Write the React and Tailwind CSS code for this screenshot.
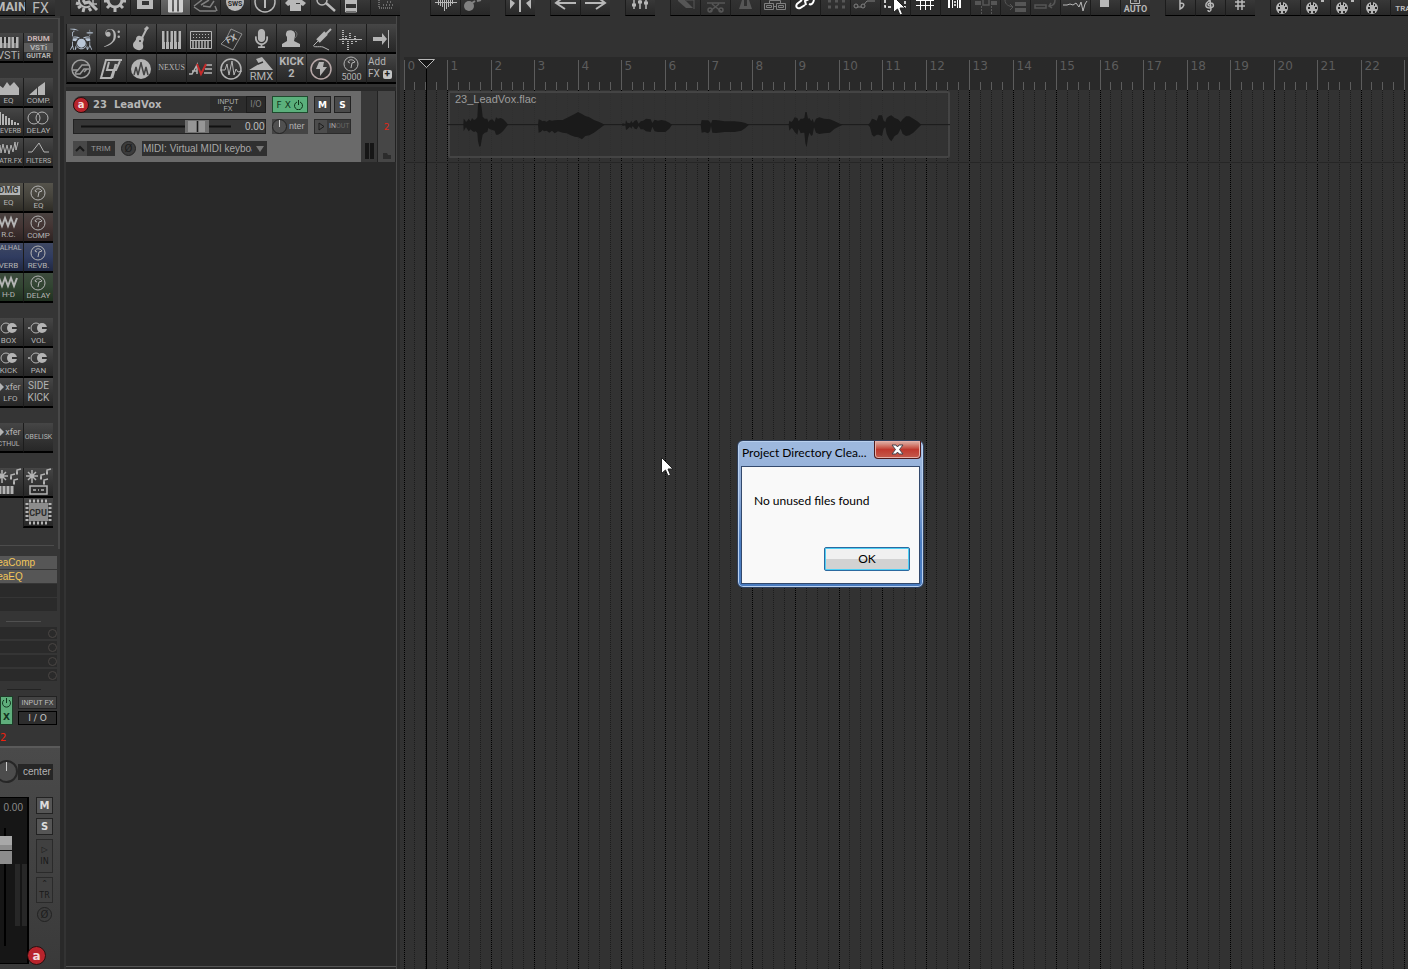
import React from "react";
import { GiDrumKit, GiFClef } from "react-icons/gi";
import { FaMicrophone } from "react-icons/fa";

const Art = ({ h = 28, children }) => (
  <svg
    width="29"
    height={h}
    viewBox={`0 0 29 ${h}`}
    fill="none"
    stroke="currentColor"
    strokeWidth="1.5"
    className="shrink-0"
    aria-hidden="true"
  >
    {children}
  </svg>
);

const tones = {
  grey: "from-[#464646] via-[#353535] to-[#272727]",
  olive: "from-[#55534b] via-[#45433c] to-[#2e2c26]",
  red: "from-[#4a4240] via-[#433433] to-[#2e2322]",
  blue: "from-[#3f4862] via-[#303c60] to-[#202842]",
  green: "from-[#3d4b3d] via-[#314431] to-[#203020]",
};

const Tool = ({ name, tone = "grey", children }) => (
  <button
    type="button"
    aria-label={name}
    className={`flex h-[30px] w-[30px] shrink-0 flex-col items-center justify-center overflow-hidden border-b-2 border-l border-b-black border-l-[#1c1c1c] bg-linear-to-b text-[#b4b4b4] ${tones[tone]}`}
  >
    {children}
  </button>
);

const Tag = ({ children }) => (
  <span className="whitespace-nowrap font-[Roboto,sans-serif] text-[8px] leading-[10px]">{children}</span>
);

const SmallTag = ({ children }) => (
  <span className="whitespace-nowrap font-[Roboto,sans-serif] text-[7px] leading-[10px]">{children}</span>
);

/* ---------- top toolbar ---------- */

const MidiPlug = ({ dot }) => (
  <Art h={15}>
    <circle cx="11" cy="8" r="6" fill="currentColor" stroke="none" />
    <path d="M7 7h2v2h-2zM10 2h2v3h-2zM14 7h2v2h-2zM8 11h2v2h-2zM12 11h2v2h-2zM8 4h1v2h-1zM13 4h1v2h-1z" fill="#2b2b2b" stroke="none" />
    {dot && <path d="M20 1h3" strokeWidth="2" />}
  </Art>
);

const topGroups = [
  [
    { name: "Main", art: <span className="text-[13px] leading-[14px] font-bold">MAIN</span> },
    { name: "FX", art: <span className="text-[14px] leading-[16px]">FX</span> },
  ],
  [
    {
      name: "Actions",
      art: (
        <Art h={15}>
          <path d="M5 3l3 1M7 8l3-2M12 12l1-4M20 11l-2-3" strokeWidth="3" />
          <path d="M8 0a7 7 0 0 0 11 6" strokeWidth="2" />
          <path d="M12 0l2 3 4-1 8 8" strokeWidth="3" />
          <path d="M22 0v4h4" strokeWidth="1.5" />
        </Art>
      ),
    },
    {
      name: "Settings",
      art: (
        <Art h={15}>
          <path d="M7 0a7 7 0 0 0 14 0" strokeWidth="3" />
          <path d="M14 7v5M9 5l-3 3M19 5l3 3M3 1h4M21 1h4" strokeWidth="3" />
        </Art>
      ),
    },
    { name: "Save", art: <Art h={15}><path d="M6 0h16v9H6zM11 1v4h7V1z" fill="currentColor" stroke="none" fillRule="evenodd" /></Art> },
    { name: "Mixer", on: true, art: <Art h={15}><path d="M8 0h3v12H8zM13 0h3v12h-3zM18 0h3v12h-3z" fill="currentColor" stroke="none" /><path d="M7.500 0v12h14V0" strokeWidth="1" /></Art> },
    { name: "Notes", dim: true, art: <Art h={15}><path d="M3 6l8-6M3 7l6 4 16 0M10 5l8-5M12 6l7 1 4-6M24 6l2 5" /></Art> },
    {
      name: "SWS",
      art: (
        <Art h={15}>
          <circle cx="14" cy="2" r="9" fill="currentColor" stroke="none" />
          <text x="14" y="6" textAnchor="middle" fontSize="7" fontWeight="bold" fill="#2b2b2b" stroke="none" fontFamily="Roboto">SWS</text>
        </Art>
      ),
    },
    { name: "Info", art: <Art h={15}><circle cx="14" cy="2" r="10" /><path d="M14 0v8" strokeWidth="2" /></Art> },
    { name: "Shirt", art: <Art h={15}><path d="M4 3l3-3h14l4 3-3 3-2-1v6H9V5L7 6zM15 3h4v1h-4z" fill="currentColor" stroke="none" fillRule="evenodd" /></Art> },
    { name: "Find", art: <Art h={15}><circle cx="11" cy="0" r="5" /><path d="M15 3l9 8" strokeWidth="2.5" /></Art> },
    { name: "Layers", art: <Art h={15}><path d="M4.500 0v12h11V0M4 3.500h11M4 8.500h11" strokeWidth="1" /><path d="M5 0h10v3H5zM5 9h10v2H5z" fill="currentColor" stroke="none" /></Art> },
    { name: "Spacing", dim: true, art: <Art h={15}><path d="M8 0v8h14" strokeDasharray="1 1" /><path d="M12 5h10M16 2h6" strokeDasharray="1 2" /></Art> },
  ],
  [
    { name: "Waveform", art: <Art h={15}><path d="M4 2.500h22M7.500 0v5M9.500 0v6M11.500 0v7M13.500 0v11M15.500 0v9M17.500 0v7M19.500 0v6M21.500 0v4" strokeWidth="1" /></Art> },
    { name: "Scrub", dim: true, art: <Art h={15}><circle cx="8" cy="6" r="5" fill="currentColor" stroke="none" /><path d="M11 3l3-2M16 1l4-1" strokeWidth="2" /></Art> },
  ],
  [{ name: "Split", art: <Art h={15}><path d="M14 0v12" strokeWidth="2" /><path d="M4 0v9l5-6-4-3zM25 0v9l-5-6 4-3z" fill="currentColor" stroke="none" /></Art> }],
  [
    { name: "Undo", art: <Art h={15}><path d="M25 3H6M14 9L5 3l5-4" strokeWidth="2" /></Art> },
    { name: "Redo", art: <Art h={15}><path d="M4 3h19M15 9l9-6-5-4" strokeWidth="2" /></Art> },
  ],
  [{ name: "Levels", art: <Art h={15}><path d="M8 0v9M14 0v9M20 0v9" strokeWidth="1.5" /><path d="M6 5h4M12 2h4M18 3h4" strokeWidth="3" /></Art> }],
  [
    { name: "Fade", off: true, art: <Art h={15}><path d="M7 0h7L22 8H15L7 1z" fill="currentColor" stroke="none" /><path d="M15 0h8v9" strokeWidth="1" /></Art> },
    { name: "Cut", off: true, art: <Art h={15}><path d="M6 3h18M8 12L18 4M21 12L11 4" /><circle cx="9" cy="10" r="2" /><circle cx="20" cy="10" r="2" /></Art> },
    { name: "Metronome", off: true, art: <Art h={15}><path d="M11 0L8 9h13L18 0zM13 0v6h3V0z" fill="currentColor" fillRule="evenodd" stroke="none" /></Art> },
    { name: "Group", dim: true, art: <Art h={15}><path d="M3.500 3.500h9v6h-9zM15.500 3.500h9v6h-9zM5.500 5.500h5v2h-5zM17.500 5.500h5v2h-5zM12 6.500h4M8.500 3V.500h11V3" strokeWidth="1" /></Art> },
    { name: "Link", bright: true, art: <Art h={15}><path d="M11 0L6 4c-2 3 1 5 3 4l5-3M15 5l-1-4 4-2M18 4c2 1 4 0 5-4" strokeWidth="2" /></Art> },
    { name: "Dots", off: true, art: <Art h={15}><path d="M7 1h3M14 1h3M21 1h3M7 7h3M14 7h3M21 7h3" strokeWidth="3" /></Art> },
    { name: "Envelope", dim: true, art: <Art h={15}><path d="M5 7h6l5-6h8" strokeWidth="1" /><circle cx="5" cy="6" r="2" fill="#333" strokeWidth="1" /><circle cx="12" cy="6" r="2" fill="#333" strokeWidth="1" /></Art> },
    { name: "Select", bright: true, art: <Art h={15}><path d="M4 0v7h20V0" strokeDasharray="3 2" /></Art> },
    { name: "Grid", bright: true, art: <Art h={15}><path d="M9.500 0v10M14.500 0v10M19.500 0v10M5 .500h18M5 5.500h18" strokeWidth="1" /></Art> },
    { name: "Bars", bright: true, art: <Art h={15}><path d="M8 0v8M19 0v8" strokeWidth="2" /><path d="M11.500 0v8M16.500 0v8" strokeWidth="1" /><path d="M13 2h2M13 5h2" /></Art> },
    { name: "Heal", off: true, art: <Art h={15}><path d="M4 3h6M20 3h6" strokeWidth="4" /><path d="M12 0v5h6V0" /><path d="M10.500 6v8M20.500 6v8" strokeWidth="1" strokeDasharray="2 1" /></Art> },
    { name: "Move rows", off: true, art: <Art h={15}><path d="M4 0c0 5 4 6 8 7M9 4l3 3-3 3" strokeWidth="1" /><path d="M14 2h11v4H14zM14 8h11v4H14z" fill="currentColor" stroke="none" /></Art> },
    { name: "Loop item", off: true, art: <Art h={15}><path d="M4 5h11v3H4zM18 6c4 0 6-2 6-6M20 3l-2 3 3 2" /></Art> },
    { name: "Automation", art: <Art h={15}><path d="M2 5h4l3-1 3 1 3-2 3 4 2-5 2 9 2-7 2-3" strokeWidth="1" /></Art> },
    { name: "Stop", art: <Art h={15}><path d="M9 0h9v7H9z" fill="currentColor" stroke="none" /></Art> },
    { name: "Auto", art: <><Art h={4}><path d="M9.500 0v3.500h9V0M13 1h3" strokeWidth="1" /></Art><span className="font-[Roboto,sans-serif] text-[9px] leading-[10px] font-bold">AUTO</span></> },
  ],
  [
    { name: "Flat", art: <Art h={15}><path d="M14 0v9c4-2 6-6 0-6" /></Art> },
    { name: "Clef", art: <Art h={15}><path d="M14 0c-6 4-5 8 0 8 5 0 4-6 0-5-3 1-2 3 0 3M14 0l1 9c0 3-3 3-3 1" strokeWidth="1.5" /></Art> },
    { name: "Sharp", art: <Art h={15}><path d="M12 0v10M16 0v10M9 2h10M9 6h10" /></Art> },
  ],
  [
    { name: "MIDI 1", art: <MidiPlug /> },
    { name: "MIDI 2", art: <MidiPlug dot /> },
    { name: "MIDI 3", art: <MidiPlug dot /> },
    { name: "MIDI 4", art: <MidiPlug /> },
    { name: "Track", art: <span className="pt-[3px] text-[8px] leading-[12px] font-bold">TRAK</span> },
  ],
];

const topColor = ({ on, off, dim, bright }) => {
  if (off) return "text-[#565656] from-[#323232] to-[#2b2b2b]";
  if (dim) return "text-[#808080] from-[#333] to-[#282828]";
  if (bright) return "text-white from-[#2c2c2c] to-[#2c2c2c]";
  if (on) return "text-[#cfcfcf] from-[#666] to-[#505050]";
  return "text-[#b8b8b8] from-[#383838] to-[#282828]";
};

const TopBar = () => (
  <header className="-ml-[5px] flex h-4 shrink-0 gap-[15px] overflow-hidden font-[Roboto,sans-serif]">
    {topGroups.map((group, i) => (
      <div key={i} className={`flex shrink-0 ${i === 2 ? "ml-[15px]" : ""}`}>
        {group.map((b) => (
          <button
            key={b.name}
            type="button"
            aria-label={b.name}
            className={`flex h-4 w-[30px] flex-col items-center overflow-hidden border-b border-l border-b-black border-l-[#1c1c1c] bg-linear-to-b ${topColor(b)}`}
          >
            {b.art}
          </button>
        ))}
      </div>
    ))}
  </header>
);

/* ---------- left dock ---------- */

const Dmg = () => (
  <Art h={18}>
    <circle cx="14" cy="10" r="7" strokeWidth="1" />
    <path d="M11 8c1-3 5-3 7 0l-3 1-1 5M11 8l2 1" strokeWidth="1" />
  </Art>
);

const Waves = () => (
  <Art h={15}>
    <path d="M5 3l3 8 3-8 3 8 3-8 3 8 3-8" strokeWidth="2" />
  </Art>
);

const Knobs = () => (
  <Art h={17}>
    <circle cx="12" cy="9" r="5" strokeWidth="1" />
    <circle cx="18" cy="9" r="5" fill="currentColor" stroke="none" />
    <path d="M18 9h6" stroke="#333" strokeWidth="2" />
    <path d="M4 9h2" />
  </Art>
);

const Keys = () => (
  <Art h={16}>
    <path d="M7 3v11M11 3v11M15 3v11M19 3v11M23 3v11" strokeWidth="3" />
    <path d="M9 3v6M13 3v6M21 3v6" stroke="#2b2b2b" strokeWidth="2" />
  </Art>
);

const Xfer = () => (
  <span className="flex items-center gap-px text-[9px] leading-[13px] font-[Roboto,sans-serif]">
    <svg width="8" height="12" viewBox="0 0 8 12" fill="none" stroke="currentColor" strokeWidth="3"><path d="M1 1l5 5-5 5" /></svg>
    xfer
  </span>
);

const Spark = ({ children }) => (
  <Art>
    <path d="M8 2v13M2 8h12M4 4l8 8M12 4l-8 8" strokeWidth="1.5" />
    <path d="M17 10v-3l4-1M23 5v-3l4-1M20 15v-3l4-1" strokeWidth="1.5" />
    <path d="M16 10h2M22 5h2M19 15h2" strokeWidth="3" />
    {children}
  </Art>
);

const dockGroups = [
  [
    { name: "VSTi", art: <><Keys /><span className="font-[Roboto,sans-serif] text-[11px] leading-[11px]">VSTi</span></> },
    {
      name: "Drum VSTi Guitar",
      art: (
        <span className="flex w-full flex-col text-center font-[Roboto,sans-serif] text-[8px] leading-[9px] font-bold">
          <span className="text-[#c9b5b5]">DRUM</span>
          <span className="bg-[#5b5b5b]">VSTi</span>
          <span className="text-[7px]">GUITAR</span>
        </span>
      ),
    },
  ],
  [
    { name: "EQ", art: <><Art h={17}><path d="M5 16V6l4 3 4-6 3 4 4-4 5 6v7z" fill="currentColor" stroke="none" /></Art><Tag>EQ</Tag></> },
    { name: "Comp", art: <><Art h={17}><path d="M5 16L13 9v7zM14 8l7-5v13h-7z" fill="currentColor" stroke="none" /></Art><Tag>COMP.</Tag></> },
    { name: "Reverb", art: <><Art h={17}><path d="M6 3v13M9 5v11M12 7v9M15 9v7M18 11v5M21 13v3M24 14v2" strokeWidth="2" /></Art><SmallTag>REVERB</SmallTag></> },
    { name: "Delay", art: <><Art h={17}><circle cx="10" cy="9" r="6" strokeWidth="1" /><circle cx="18" cy="9" r="6" strokeWidth="1" /></Art><Tag>DELAY</Tag></> },
    { name: "Saturation", art: <><Art h={17}><path d="M4 10l2-4 1 8 2-9 2 9 2-8 2 9 2-9 2 7 2-10 1 8 2-8" strokeWidth="1" /></Art><SmallTag>SATR.FX</SmallTag></> },
    { name: "Filters", art: <><Art h={17}><path d="M4 13h4l7-9 5 9h5" strokeWidth="1" /></Art><SmallTag>FILTERS</SmallTag></> },
  ],
  [
    { name: "DMG EQ", tone: "olive", art: <><span className="mb-[3px] bg-[#b4b4b4] px-[2px] font-[Roboto,sans-serif] text-[9px] leading-[9px] font-bold text-[#3b3b36]">DMG</span><Tag>EQ</Tag></> },
    { name: "EQuality", tone: "olive", art: <><Dmg /><Tag>EQ</Tag></> },
    { name: "R.C.", tone: "red", art: <><Waves /><Tag>R.C.</Tag></> },
    { name: "Compassion", tone: "red", art: <><Dmg /><Tag>COMP</Tag></> },
    { name: "Valhalla verb", tone: "blue", art: <><SmallTag>VALHAL</SmallTag><span className="pt-1 leading-[10px]"><Tag>VERB</Tag></span></> },
    { name: "Revb", tone: "blue", art: <><Dmg /><Tag>REVB.</Tag></> },
    { name: "H-Delay", tone: "green", art: <><Waves /><Tag>H-D</Tag></> },
    { name: "DMG Delay", tone: "green", art: <><Dmg /><Tag>DELAY</Tag></> },
  ],
  [
    { name: "Box", art: <><Knobs /><Tag>BOX</Tag></> },
    { name: "Vol", art: <><Knobs /><Tag>VOL</Tag></> },
    { name: "Kick", art: <><Knobs /><Tag>KICK</Tag></> },
    { name: "Pan", art: <><Knobs /><Tag>PAN</Tag></> },
    { name: "LFO", art: <><Xfer /><Tag>&nbsp; LFO</Tag></> },
    { name: "Side kick", art: <span className="font-[Roboto,sans-serif] text-[10px] leading-[12px]">SIDE<br />KICK</span> },
  ],
  [
    { name: "Cthulhu", art: <><Xfer /><SmallTag>CTHUL</SmallTag></> },
    { name: "Obelisk", art: <span className="font-[Roboto,sans-serif] text-[7px] leading-[12px]">OBELISK</span> },
  ],
  [
    { name: "Spark keys", art: <Spark><path d="M6 18v8M10 18v8M14 18v8M18 18v8" strokeWidth="3" /></Spark> },
    { name: "Spark tape", art: <Spark><path d="M6 18h17v8H6zM9 22h3M14 22h1M17 22h3" /></Spark> },
    null,
    {
      name: "CPU",
      art: (
        <Art>
          <path d="M5 3h20M5 25h20M3 5v20M26 5v20" strokeWidth="3" strokeDasharray="2 2" />
          <path d="M5 5h19v18H5z" fill="#8c8c8c" stroke="none" />
          <text x="14" y="18" textAnchor="middle" fontSize="9" fontWeight="bold" fill="#2b2b2b" stroke="none" fontFamily="Roboto">CPU</text>
        </Art>
      ),
    },
  ],
];

const Dock = () => (
  <div className="mt-[2px] flex h-[531px] flex-col justify-between overflow-hidden border-t border-r-2 border-[#484848] pt-[14px]">
    <div className="-ml-[7px] flex flex-col gap-[15px]">
      {dockGroups.map((group, i) => (
        <div key={i} className="grid w-[60px] grid-cols-2">
          {group.map((b, j) => (b ? <Tool key={b.name} name={b.name} tone={b.tone}>{b.art}</Tool> : <span key={j} />))}
        </div>
      ))}
    </div>
    <div className="mr-1 mb-[3px] h-px bg-[#4c4c4c]" />
  </div>
);

/* ---------- mixer strip ---------- */

const Badge = ({ className }) => (
  <span
    className={`flex shrink-0 items-center justify-center rounded-full border border-[#2a1010] bg-[#b8242c] font-['DejaVu_Sans',sans-serif] font-bold text-[#f4dcdc] ${className}`}
  >
    a
  </span>
);

const Phase = () => (
  <button type="button" aria-label="Phase" className="flex size-[15px] items-center justify-center rounded-full border border-[#222] bg-[#3c3c3c] text-[10px] text-[#1c1c1c]">
    Ø
  </button>
);

const MixerStrip = () => (
  <section className="flex min-h-0 flex-1 flex-col font-['DejaVu_Sans',sans-serif]">
    <ul className="mt-[7px] mr-[3px] flex flex-col gap-px text-[10px] leading-[13px] text-[#f2c65a] font-['Liberation_Sans',sans-serif]">
      <li className="-ml-[10px] overflow-hidden bg-[#565656] text-[10px]">ReaComp</li>
      <li className="-ml-[10px] overflow-hidden bg-[#565656]">ReaEQ</li>
      <li className="h-[13px] bg-[#2a2a2a]" />
      <li className="h-[13px] bg-[#2a2a2a]" />
    </ul>
    <div className="mt-[10px] ml-[6px] h-px w-[35px] bg-[#505050]" />
    <ul className="mt-[5px] mr-[3px] flex flex-col gap-[2px]">
      {[0, 1, 2, 3].map((n) => (
        <li key={n} className="flex h-3 justify-end bg-[#2a2a2a]">
          <span className="mt-[2px] size-[9px] rounded-full border border-[#4a4644]" />
        </li>
      ))}
    </ul>
    <div className="mt-2 ml-[7px] h-px w-[34px] bg-[#222]" />
    <div className="mt-[6px] mr-[3px] flex justify-between">
      <div className="flex h-[29px] w-[13px] flex-col items-center justify-between border border-[#1d3d28] bg-[#5fae7c] text-[9px] leading-[13px] font-bold text-[#12351f]">
        <svg width="11" height="12" viewBox="0 0 11 12" fill="none" stroke="currentColor" strokeWidth="1"><path d="M3 3a4 4 0 1 0 5 0M5.500 1v5" /></svg>
        <span>X</span>
      </div>
      <div className="flex flex-col gap-[2px]">
        <button type="button" className="h-[13px] w-[39px] whitespace-nowrap border border-[#222] bg-[#444] text-center font-['Liberation_Sans',sans-serif] text-[7px] leading-[11px] text-[#c0c0c0]">INPUT FX</button>
        <button type="button" className="h-[14px] w-[39px] border border-black bg-[#2c2c2c] text-[9px] leading-[12px] text-[#c4c4c4]">I / O</button>
      </div>
    </div>
    <div className="mt-[6px] text-[10px] leading-[14px] text-[#f0200c]">2</div>
    <div className="mt-px flex flex-1 flex-col border-t-2 border-[#5a5a5a] bg-linear-to-b from-[#4a4a4a] to-[#3a3a3a] pt-3">
      <div className="-ml-[5px] flex items-center">
        <span className="flex size-[23px] justify-center rounded-full border-2 border-[#262626] bg-[#4c4c4c]"><span className="h-[9px] w-px bg-[#ccc]" /></span>
        <span className="w-[35px] bg-[#262626] pl-[5px] font-['Liberation_Sans',sans-serif] text-[10px] leading-4 text-[#b4b4b4]">center</span>
      </div>
      <div className="mt-[14px] flex flex-1 gap-[7px]">
        <div className="flex h-[167px] w-[29px] flex-col border-y border-r-2 border-black bg-[#161616]">
          <span className="pt-1 text-right pr-1 font-['Liberation_Sans',sans-serif] text-[10px] leading-[12px] text-[#8a8a8a]">0.00</span>
          <svg width="27" height="146" viewBox="0 0 27 146" aria-label="Volume fader">
            <path d="M5 14v118" stroke="#000" strokeWidth="2" />
            <path d="M15 50h5v62h-5zM22 50h5v62h-5z" fill="#272727" />
            <path d="M0 22h12v28H0z" fill="#8c8c8c" />
            <path d="M0 22h12v9H0z" fill="#a8a8a8" />
            <path d="M0 36.500h12" stroke="#111" />
          </svg>
        </div>
        <div className="flex w-[17px] flex-col items-center gap-1">
          <button type="button" className="h-[17px] w-[17px] border border-[#222] bg-[#555] text-[10px] leading-[15px] font-bold text-[#ddd]">M</button>
          <button type="button" className="h-[17px] w-[17px] border border-[#222] bg-[#555] text-[10px] leading-[15px] font-bold text-[#ddd]">S</button>
          <button type="button" className="h-[34px] w-[17px] border border-[#2a2a2a] bg-[#404040] text-[8px] leading-[12px] text-[#191919]">▷<br />IN</button>
          <button type="button" className="h-[26px] w-[17px] border border-[#2a2a2a] bg-[#404040] text-[8px] leading-[12px] text-[#191919]">⌃<br />TR</button>
          <Phase />
          <Badge className="mt-5 -ml-4 size-[19px] text-[12px]" />
        </div>
      </div>
    </div>
  </section>
);

/* ---------- fx toolbar + track panel ---------- */

const fxTools = [
  { name: "Drums", art: <GiDrumKit size={25} color="#b9c6d6" /> },
  { name: "Bass", art: <GiFClef size={20} /> },
  {
    name: "Guitar",
    art: (
      <Art>
        <path d="M20 4l-6 12" strokeWidth="2" />
        <path d="M18 6l3-3" strokeWidth="3" />
        <path d="M13 12c-2-1-4 1-4 3s-3 3-3 6c0 5 8 7 10 3 1-3-1-4 0-6s2-5-3-6z" fill="currentColor" stroke="none" />
        <circle cx="13" cy="17" r="1" fill="#333" stroke="none" />
      </Art>
    ),
  },
  { name: "Piano", art: <Art><path d="M5 7h3v18H5zM9 7h3v18H9zM13 7h3v18h-3zM17 7h3v18h-3zM21 7h3v18h-3z" fill="currentColor" stroke="none" /><path d="M8.500 7v11M12.500 7v11M20.500 7v11" stroke="#2b2b2b" strokeWidth="2" /></Art> },
  { name: "Synth", art: <Art><path d="M3.500 7.500h21v17h-21zM3 16.500h21" strokeWidth="1" /><path d="M6 10.500h16M6 13.500h16" strokeWidth="1" strokeDasharray="1 2" /><path d="M6 17v7M9 17v7M12 17v7M15 17v7M18 17v7M21 17v7" strokeWidth="1.5" /></Art> },
  { name: "FX pedal", art: <Art><g stroke="#8f8f8f" strokeWidth="1"><path d="M9 15L14 5l11 5-9 16-12-6zM9 15l-5 5" /></g><text x="9" y="18" transform="rotate(-25 14 15)" fontSize="9" fill="currentColor" stroke="none" fontWeight="bold" fontFamily="Roboto">FX</text></Art> },
  { name: "Microphone", art: <FaMicrophone size={19} /> },
  { name: "Group", art: <Art><path d="M10 7c4-2 9 0 8 5l-1 5 6 3v3H5v-3l5-3v-4c-2-2-1-4 0-6z" fill="currentColor" stroke="none" /><path d="M18 7c3 2 2 5 0 7" stroke="#777" strokeWidth="1" /></Art> },
  { name: "Jack", art: <Art><path d="M24 5l-5 5" strokeWidth="2" /><path d="M19 9l-8 8" strokeWidth="5" /><path d="M11 17l-4 4c-2 3 5 1 9 2l6 3" strokeWidth="1" /></Art> },
  { name: "Peaks", art: <Art><path d="M2 15.500h23" strokeWidth="1" /><path d="M6 6v9M9 12v3M13 9v6M18 12v3M6 17v3M11 17v10M15 17v4M19 17v2" strokeDasharray="1 1" strokeWidth="2" /></Art> },
  { name: "Skip", art: <Art><path d="M6 13h9V9l5 6-5 6v-4H6z" fill="currentColor" stroke="none" /><path d="M21.500 6v18" strokeWidth="1" /></Art> },
  { name: "Slash", art: <Art><g stroke="#9c9c9c"><circle cx="14" cy="15" r="9" strokeWidth="1.500" /><path d="M6 16h5l4-5h7M8 20h5l4-5h5M11 16l-3 3M20 15l-3 3" strokeWidth="1.500" /></g></Art> },
  { name: "Serum", art: <Art><path d="M25 6H9L4 24h10l3-9M12 8l-2 8h9l4-9" strokeWidth="2" /><path d="M19 10l-4 14" strokeWidth="2.500" /></Art> },
  { name: "Massive", art: <Art><circle cx="14" cy="15" r="10" fill="currentColor" stroke="none" /><path d="M7 21l2-8 2 8 3-12 3 12 2-8 2 8M14 8v4" stroke="#444" strokeWidth="1.500" /></Art> },
  { name: "Nexus", art: <span className="font-['Liberation_Serif',serif] text-[8px] leading-[12px]">NEXUS</span> },
  { name: "Ave", art: <Art><path d="M2 20h3l5-9v9M5 17h5M19 11h6M18 15h7M17 19h8" strokeWidth="1.500" /><path d="M10 10l4 10 5-10" stroke="#c42a2a" strokeWidth="2" /></Art> },
  { name: "Pulse", art: <Art><circle cx="14" cy="15" r="10" strokeWidth="1.500" /><path d="M3 16h5l2-6 2 11 3-14 2 14 2-6 2 3 4-1" strokeWidth="1" /></Art> },
  { name: "RMX", art: <><Art h={17}><path d="M2 16L12 10 9 5l6-2 11 13z" fill="currentColor" stroke="none" /><path d="M11 10l5-2" stroke="#333" /></Art><span className="font-[Roboto,sans-serif] text-[11px] leading-[11px]">RMX</span></> },
  { name: "Kick 2", art: <span className="text-center font-[Roboto,sans-serif] text-[11px] leading-[12px] font-bold">KICK<br />2</span> },
  { name: "Bolt", art: <Art><circle cx="14" cy="15" r="10" stroke="#b8a8a8" /><path d="M12 8h5l-1 5h4l-7 9v-7H9z" fill="currentColor" stroke="none" /></Art> },
  { name: "5000", art: <><Dmg /><span className="font-[Roboto,sans-serif] text-[9px] leading-[10px]">5000</span></> },
  {
    name: "Add FX",
    art: (
      <span className="w-full pl-px text-left font-[Roboto,sans-serif] text-[10px] leading-[12px]">
        Add<br />
        <span className="flex items-center gap-[3px]">FX<span className="flex size-[9px] items-center justify-center rounded-xs bg-[#c4c4c4] font-bold text-[#222]">+</span></span>
      </span>
    ),
  },
];

const TrackPanel = () => (
  <article className="flex h-[71px] bg-[#6a6a6a] font-['DejaVu_Sans',sans-serif]">
    <div className="flex w-[295px] flex-col gap-[6px] pt-[5px] pl-[7px]">
      <div className="flex h-[17px] items-center">
        <div className="flex h-[17px] w-[137px] items-center rounded-l-full bg-[#343434]">
          <Badge className="size-4 text-[10px]" />
          <span className="pl-1 text-[10px] leading-4 font-bold text-[#b6b6b6]">23&nbsp; LeadVox</span>
        </div>
        <button type="button" className="h-[17px] w-9 bg-[#2c2c2c] font-['Liberation_Sans',sans-serif] text-[7px] leading-[7px] text-[#b0b0b0]">INPUT<br />FX</button>
        <button type="button" className="h-[17px] w-5 border border-[#1c1c1c] bg-[#2a2a2a] text-[8px] leading-[14px] text-[#808080]">I/O</button>
        <button type="button" className="ml-[6px] flex h-[17px] w-9 items-center justify-evenly border border-[#1f4a2e] bg-[#5bb07c] text-[9px] leading-[14px] text-[#0f3319]">
          <span>F X</span>
          <svg width="9" height="10" viewBox="0 0 9 10" fill="none" stroke="currentColor"><path d="M3 2a4 4 0 1 0 3 0M4.500 0v5" /></svg>
        </button>
        <button type="button" className="ml-[6px] h-[17px] w-[17px] border border-[#222] bg-[#4a4a4a] text-[9px] leading-[14px] font-bold text-white">M</button>
        <button type="button" className="ml-[3px] h-[17px] w-[17px] border border-[#222] bg-[#4a4a4a] text-[9px] leading-[14px] font-bold text-white">S</button>
      </div>
      <div className="flex h-[15px] items-center">
        <div className="flex h-[15px] w-[193px] items-center border border-[#222] bg-[#363636]">
          <svg width="171" height="13" viewBox="0 0 171 13" aria-label="Volume">
            <path d="M7 6.500h150" stroke="#111" strokeWidth="2" />
            <path d="M111 0h24v13h-24z" fill="#707070" />
            <path d="M114 1h8v11h-8zM125 1h6v11h-6z" fill="#969696" />
            <path d="M123.500 1v11" stroke="#1a1a1a" />
          </svg>
          <span className="font-['Liberation_Sans',sans-serif] text-[10px] leading-[13px] text-[#c0c0c0]">0.00</span>
        </div>
        <div className="ml-[6px] flex h-[15px] w-9 items-center bg-[#444]">
          <span className="flex size-[15px] justify-center rounded-full border border-[#222] bg-[#505050]"><span className="h-[7px] w-px bg-[#ccc]" /></span>
          <span className="pl-[2px] font-['Liberation_Sans',sans-serif] text-[9px] text-[#b4b4b4]">nter</span>
        </div>
        <button type="button" className="ml-[6px] flex h-[15px] w-[37px] items-center gap-[2px] border border-[#2b2b2b] bg-[#3a3a3a] font-[Roboto,sans-serif] text-[7px] text-[#a8a8a8]">
          <svg width="12" height="13" viewBox="0 0 12 13" fill="none" stroke="#1c1c1c" className="bg-[#4c4c4c]"><path d="M4 3l5 3.500-5 3.500z" /></svg>
          <span>IN<span className="text-[#666]">OUT</span></span>
        </button>
      </div>
      <div className="flex h-[17px] items-center">
        <button type="button" className="flex h-[15px] w-[42px] items-center bg-[#303030] font-['Liberation_Sans',sans-serif] text-[8px] text-[#9a9a9a]">
          <svg width="14" height="15" viewBox="0 0 14 15" fill="none" stroke="#1a1a1a" strokeWidth="2"><path d="M0 0h14v15H0z" fill="#484848" stroke="none" /><path d="M3 10l4-4 4 4" /></svg>
          <span className="pl-1">TRIM</span>
        </button>
        <span className="mr-[6px] ml-[6px] flex"><Phase /></span>
        <div className="flex h-[15px] w-[125px] items-center bg-[#303030] text-[#a8a8a8]">
          <select aria-label="MIDI input" className="w-[110px] appearance-none overflow-hidden pl-px font-['Liberation_Sans',sans-serif] text-[10px] leading-[14px]">
            <option>MIDI: Virtual MIDI keyboard</option>
          </select>
          <svg width="8" height="6" viewBox="0 0 8 6" className="ml-1" fill="#777"><path d="M0 0h8L4 6z" /></svg>
        </div>
      </div>
    </div>
    <div className="flex w-4 items-end justify-center gap-px bg-[#383838] pb-[3px]">
      <span className="h-4 w-1 bg-[#161616]" />
      <span className="h-4 w-1 bg-[#161616]" />
    </div>
    <div className="flex flex-1 flex-col items-center justify-end border-r border-l border-[#222] bg-[#464646] pb-[3px] text-[9px] leading-[12px] text-[#e02818]">
      <span>2</span>
      <svg width="8" height="6" viewBox="0 0 8 6" className="mt-5" fill="#2c2c2c"><path d="M0 0h4l1 2h3v4H0z" /></svg>
    </div>
  </article>
);

/* ---------- arrange view ---------- */

const BAR = 43.5;
const FIRST = 43;
const bars = Array.from({ length: 60 }, (_, i) => i);
const barX = (n, q = 0) => Math.round(FIRST + (n - 1) * BAR + (q * BAR) / 4) + 0.5;

const Ruler = () => (
  <svg className="block h-[33px] w-full bg-[#292929]" aria-label="Timeline">
    {bars.map((n) => (
      <g key={n}>
        <path d={`M${barX(n)} 3v30`} stroke="#5c5c5c" />
        {[1, 2, 3].map((q) => (
          <path key={q} d={`M${barX(n, q)} 25v8`} stroke="#5c5c5c" />
        ))}
        <text x={barX(n) + 3} y="13" fill="#5c5c5c" fontSize="12" fontFamily="DejaVu Sans">{n}</text>
      </g>
    ))}
  </svg>
);

const GridLines = () => (
  <svg className="block h-full w-full" aria-hidden="true">
    {bars.map((n) => (
      <g key={n} strokeDasharray="1 1">
        <path d={`M${barX(n)} 0v3000`} stroke="#000" />
        {[1, 2, 3].map((q) => (
          <path key={q} d={`M${barX(n, q)} 0v3000`} stroke="#1c1c1c" />
        ))}
      </g>
    ))}
    <path d="M0 72.500h4000" stroke="#262626" />
  </svg>
);

// each phrase: [x, up, down] in thirds of a pixel around the centre line
const phrases = [
  [[46, 0, 0], [47, 18, 20], [51, 14, 12], [54, 8, 8], [58, 12, 14], [62, 18, 20], [68, 10, 14], [72, 20, 18], [78, 14, 22], [83, 16, 20], [88, 22, 25], [90, 60, 50], [94, 72, 66], [98, 66, 64], [101, 50, 46], [104, 24, 30], [110, 18, 24], [118, 18, 22], [121, 8, 10], [126, 14, 14], [133, 16, 16], [140, 8, 18], [144, 22, 30], [150, 18, 30], [158, 20, 26], [166, 16, 18], [174, 8, 8], [180, 0, 0]],
  [[270, 0, 0], [272, 16, 24], [278, 14, 22], [284, 10, 16], [288, 12, 20], [296, 9, 18], [304, 14, 24], [312, 12, 18], [320, 13, 26], [330, 14, 20], [344, 14, 24], [356, 20, 26], [368, 26, 32], [380, 32, 36], [390, 38, 38], [402, 32, 44], [412, 26, 34], [424, 22, 32], [438, 14, 24], [452, 9, 14], [462, 4, 6], [470, 0, 0]],
  [[522, 0, 0], [524, 4, 4], [532, 2, 2], [534, 14, 16], [538, 6, 14], [546, 4, 6], [550, 12, 12], [554, 4, 4], [560, 12, 12], [566, 14, 14], [572, 3, 4], [578, 10, 14], [586, 12, 14], [594, 18, 20], [608, 16, 22], [613, 5, 6], [620, 15, 20], [630, 12, 22], [640, 14, 22], [652, 12, 22], [664, 6, 12], [672, 0, 0]],
  [[758, 0, 0], [761, 14, 24], [770, 13, 22], [780, 13, 26], [786, 8, 20], [789, 3, 4], [793, 14, 24], [804, 14, 25], [830, 10, 22], [860, 10, 22], [880, 8, 18], [892, 5, 10], [903, 0, 0]],
  [[1022, 0, 0], [1024, 12, 18], [1030, 8, 10], [1034, 12, 12], [1040, 22, 22], [1048, 20, 30], [1052, 10, 12], [1058, 18, 26], [1064, 18, 24], [1069, 20, 24], [1072, 38, 56], [1076, 38, 68], [1080, 18, 40], [1084, 20, 24], [1090, 10, 34], [1094, 18, 30], [1098, 5, 8], [1104, 18, 24], [1114, 22, 28], [1128, 18, 26], [1146, 16, 24], [1160, 10, 12], [1176, 3, 4], [1184, 0, 0]],
  [[1260, 0, 0], [1266, 6, 8], [1272, 18, 30], [1278, 16, 36], [1286, 12, 30], [1292, 28, 30], [1302, 28, 34], [1307, 12, 12], [1312, 8, 8], [1316, 20, 28], [1324, 26, 44], [1330, 28, 50], [1340, 20, 34], [1350, 16, 28], [1358, 8, 12], [1364, 16, 28], [1374, 25, 34], [1384, 25, 32], [1396, 18, 24], [1408, 10, 12], [1420, 0, 0]],
];

const outline = (pts) => {
  const top = pts.map(([x, up]) => `${x},${101 - up}`);
  const bottom = pts.map(([x, , down]) => `${x},${101 + down}`).reverse();
  return [...top, ...bottom].join(" ");
};

const MediaItem = () => (
  <div className="absolute top-px left-11 h-[67px] w-[502px] rounded-xs border-2 border-[#444] bg-[#323232]/90">
    <svg width="502" height="66" viewBox="0 0 1506 198" className="absolute -top-[2px] -left-[2px]" aria-hidden="true">
      <path d="M0 101h1506" stroke="#1a1a1a" strokeWidth="3" />
      {phrases.map((p) => (
        <polygon key={p[0][0]} points={outline(p)} fill="#1a1a1a" />
      ))}
    </svg>
    <span className="relative block pl-[5px] font-['Liberation_Sans',sans-serif] text-[11px] leading-[13px] text-[#9c9c9c]">23_LeadVox.flac</span>
  </div>
);

const Arrange = () => (
  <main className="ml-1 flex min-w-0 flex-1 flex-col pt-[41px]">
    <Ruler />
    <div className="relative min-h-0 flex-1 overflow-hidden">
      <GridLines />
      <MediaItem />
    </div>
  </main>
);

const Playhead = () => (
  <div className="absolute top-[59px] bottom-0 left-[418px] flex w-[17px] flex-col items-center">
    <svg width="17" height="10" viewBox="0 0 17 10" className="shrink-0" fill="#161616" stroke="#b8b8b8"><path d="M.500 .500h16l-8 8z" /></svg>
    <span className="w-px flex-1 bg-black" />
  </div>
);

const Pointer = ({ className }) => (
  <svg width="13" height="20" viewBox="0 0 13 20" className={`absolute ${className}`} fill="#fff" stroke="#222" strokeWidth="1" aria-hidden="true">
    <path d="M.500 .500v16l4-3.500 2.500 6 2.500-1-2.500-6h5z" />
  </svg>
);

const MessageBox = () => (
  <section
    role="dialog"
    aria-label="Project Directory Cleanup"
    className="absolute top-[440px] left-[737px] flex h-[148px] w-[187px] flex-col rounded-md border border-[#2d3f5c] bg-linear-to-b from-[#9db8de] from-5% via-[#8fabd6] via-35% to-[#4a7cc0] to-70% px-[3px] pb-[3px] font-[Lato,'Open_Sans',sans-serif] text-[12px] text-black shadow-[inset_0_0_0_1px_#b9d0ee]"
  >
    <header className="flex h-[25px] shrink-0 items-start justify-between pl-px">
      <h1 className="pt-[4px] text-[12px] leading-4 whitespace-nowrap">Project Directory Clea...</h1>
      <button
        type="button"
        aria-label="Close"
        className="-mr-px flex h-[18px] w-[47px] shrink-0 items-center justify-center rounded-b-sm border border-t-0 border-[#4d1a1c] bg-linear-to-b from-[#d9a096] from-10% via-[#c0392f] via-50% to-[#c45a4c] shadow-[inset_0_0_0_1px_#e6b0a8]"
      >
        <svg width="13" height="11" viewBox="0 0 13 11" fill="#fff" stroke="#47454f" strokeWidth="1"><path d="M1 1h4l1.500 2L8 1h4L8.500 5.500 12 10H8L6.500 8 5 10H1l3.500-4.500z" /></svg>
      </button>
    </header>
    <div className="flex flex-1 flex-col justify-between border border-[#33496c] bg-[#f9f9f9] pt-[26px] pr-[9px] pb-3 pl-3">
      <p className="leading-4 whitespace-nowrap">No unused files found</p>
      <button
        type="button"
        className="h-6 w-[86px] self-end rounded-xs border border-[#2c6aa0] bg-linear-to-b from-[#f0f0f0] from-50% to-[#d2d2d2] to-50% leading-5 shadow-[inset_0_0_0_1px_#4fd0f5]"
      >
        OK
      </button>
    </div>
  </section>
);

export default function App() {
  return (
    <div className="relative flex h-screen flex-col overflow-hidden bg-[#323232]">
      <TopBar />
      <div className="flex min-h-0 flex-1">
        <aside className="flex w-[60px] shrink-0 flex-col overflow-hidden bg-[#353535]">
          <Dock />
          <MixerStrip />
        </aside>
        <div className="w-[6px] shrink-0 border-r-2 border-[#333] bg-[#292929]" />
        <section className="flex w-[331px] shrink-0 flex-col border-r border-[#484848] bg-[#292929]">
          <div className="grid grid-cols-11 bg-[#323232] pt-2">
            {fxTools.map((t) => (
              <Tool key={t.name} name={t.name}>{t.art}</Tool>
            ))}
          </div>
          <div className="mb-1 h-[3px] bg-[#323232]" />
          <TrackPanel />
          <div className="mt-auto mb-[2px] h-px bg-[#555]" />
        </section>
        <div className="w-[3px] shrink-0 bg-[#2b2b2b]" />
        <Arrange />
      </div>
      <Playhead />
      <Pointer className="top-[457px] left-[661px]" />
      <Pointer className="-top-[4px] left-[893px]" />
      <MessageBox />
    </div>
  );
}
